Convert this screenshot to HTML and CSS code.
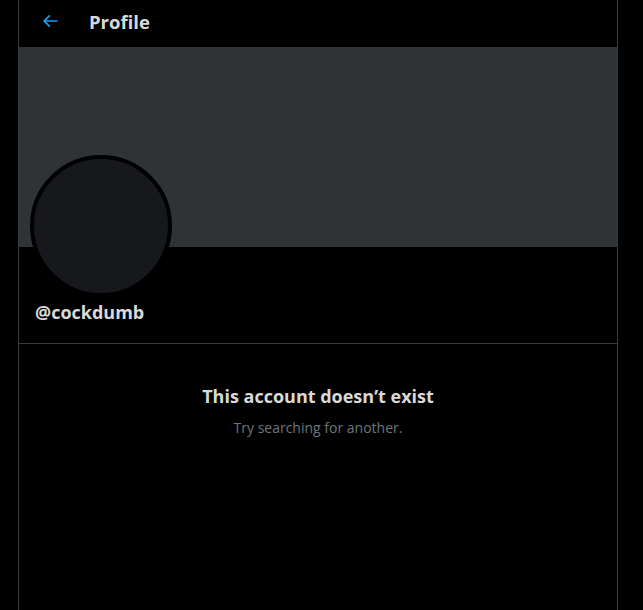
FILE: index.html
```html
<!DOCTYPE html>
<html>
<head>
<meta charset="utf-8">
<link rel="stylesheet" href="styles.css">
</head>
<body>
<main class="column">
  <header class="topbar">
    <span class="back">
      <svg viewBox="0 0 24 24" width="20" height="20"><path fill="#1d9bf0" d="M7.414 13l5.043 5.04-1.414 1.42L3.586 12l7.457-7.46 1.414 1.42L7.414 11H21v2H7.414z"/></svg>
    </span>
    <h1 class="title">Profile</h1>
  </header>
  <div class="banner"></div>
  <div class="info">
    <div class="avatar"></div>
    <div class="handle">@cockdumb</div>
  </div>
  <section class="empty">
    <div class="empty-title">This account doesn’t exist</div>
    <div class="empty-sub">Try searching for another.</div>
  </section>
</main>
</body>
</html>
```
FILE: styles.css
```css
html, body {
  margin: 0;
  padding: 0;
  background: #000;
  height: 100%;
  overflow: hidden;
}
body {
  font-family: "Open Sans", "Noto Sans", sans-serif;
  color: #d9d9d9;
}
.column {
  margin-left: 18px;
  width: 598px;
  min-height: 610px;
  border-left: 1px solid #383c3f;
  border-right: 1px solid #383c3f;
}
.topbar {
  height: 47px;
  display: flex;
  align-items: center;
  padding-left: 21px;
}
.back {
  display: flex;
  width: 20px;
  height: 20px;
  margin-right: 29px;
  margin-top: -6px;
}
.title {
  margin: 0;
  font-size: 18.5px;
  font-weight: 700;
  color: #d9d9d9;
  margin-top: -4px;
}
.banner {
  height: 200px;
  background: #2f3336;
}
.info {
  display: flex;
  flex-direction: column;
  align-items: flex-start;
  padding: 0 16px;
  height: 96px;
  border-bottom: 1px solid #383c3f;
}
.avatar {
  width: 134px;
  height: 134px;
  border-radius: 50%;
  border: 4px solid #000;
  background: #16181c;
  margin-top: -92px;
  margin-left: -5px;
  flex-shrink: 0;
}
.handle {
  font-size: 18px;
  font-weight: 700;
  margin-top: 3px;
  color: #d9d9d9;
}
.empty {
  display: flex;
  flex-direction: column;
  align-items: center;
  padding-top: 40px;
}
.empty-title {
  font-size: 18px;
  font-weight: 700;
  color: #d9d9d9;
}
.empty-sub {
  font-size: 14px;
  color: #6e767d;
  margin-top: 10px;
}
```
